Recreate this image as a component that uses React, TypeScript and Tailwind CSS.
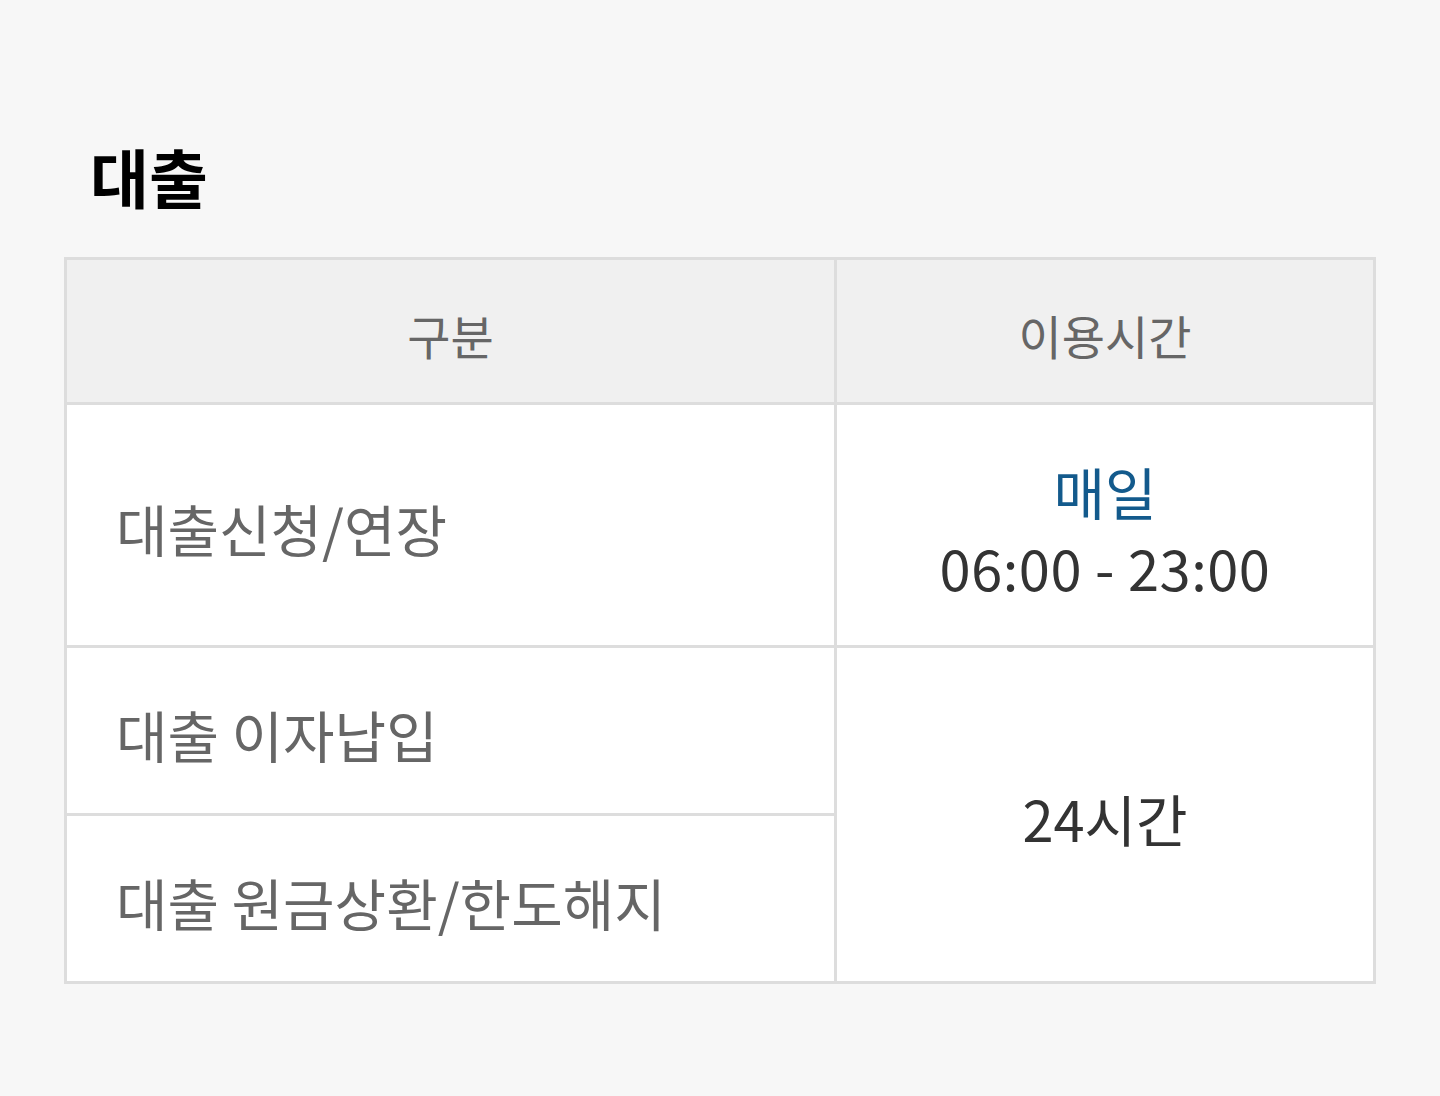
import React from 'react';

const FONT = { fontFamily: '"Noto Sans CJK KR", "Noto Sans", sans-serif' };

export default function App() {
  return (
    <div className="min-h-[1096px] w-[1440px] bg-[#f7f7f7]" style={FONT}>
      <div className="pt-[130px] pl-[64px]">
        <h2 className="pl-[26px] text-[64px] font-bold leading-[90px] text-black">대출</h2>

        <div className="mt-[37px] grid w-[1312px] grid-cols-[767px_536px] grid-rows-[142px_240px_165px_165px] gap-[3px] bg-[#dddddd] p-[3px]">
          <div className="flex items-center justify-center bg-[#f0f0f0] pt-[8px] text-[47px] text-[#666666]">구분</div>
          <div className="flex items-center justify-center bg-[#f0f0f0] pt-[8px] text-[47px] text-[#666666]">이용시간</div>

          <div className="flex items-center bg-white pl-[49px] pt-[6px] text-[56px] text-[#666666]">대출신청/연장</div>
          <div className="flex flex-col items-center justify-center bg-white pt-[8px] text-[56px] leading-[76px]">
            <span className="text-[#135a8c]">매일</span>
            <span className="text-[#333333] tracking-[0.5px]">06:00 - 23:00</span>
          </div>

          <div className="flex items-center bg-white pl-[49px] pt-[6px] text-[56px] text-[#666666]">대출 이자납입</div>
          <div className="row-span-2 flex items-center justify-center bg-white pt-[6px] text-[56px] text-[#333333]">24시간</div>

          <div className="flex items-center bg-white pl-[49px] pt-[6px] text-[56px] text-[#666666]">대출 원금상환/한도해지</div>
        </div>
      </div>
    </div>
  );
}
